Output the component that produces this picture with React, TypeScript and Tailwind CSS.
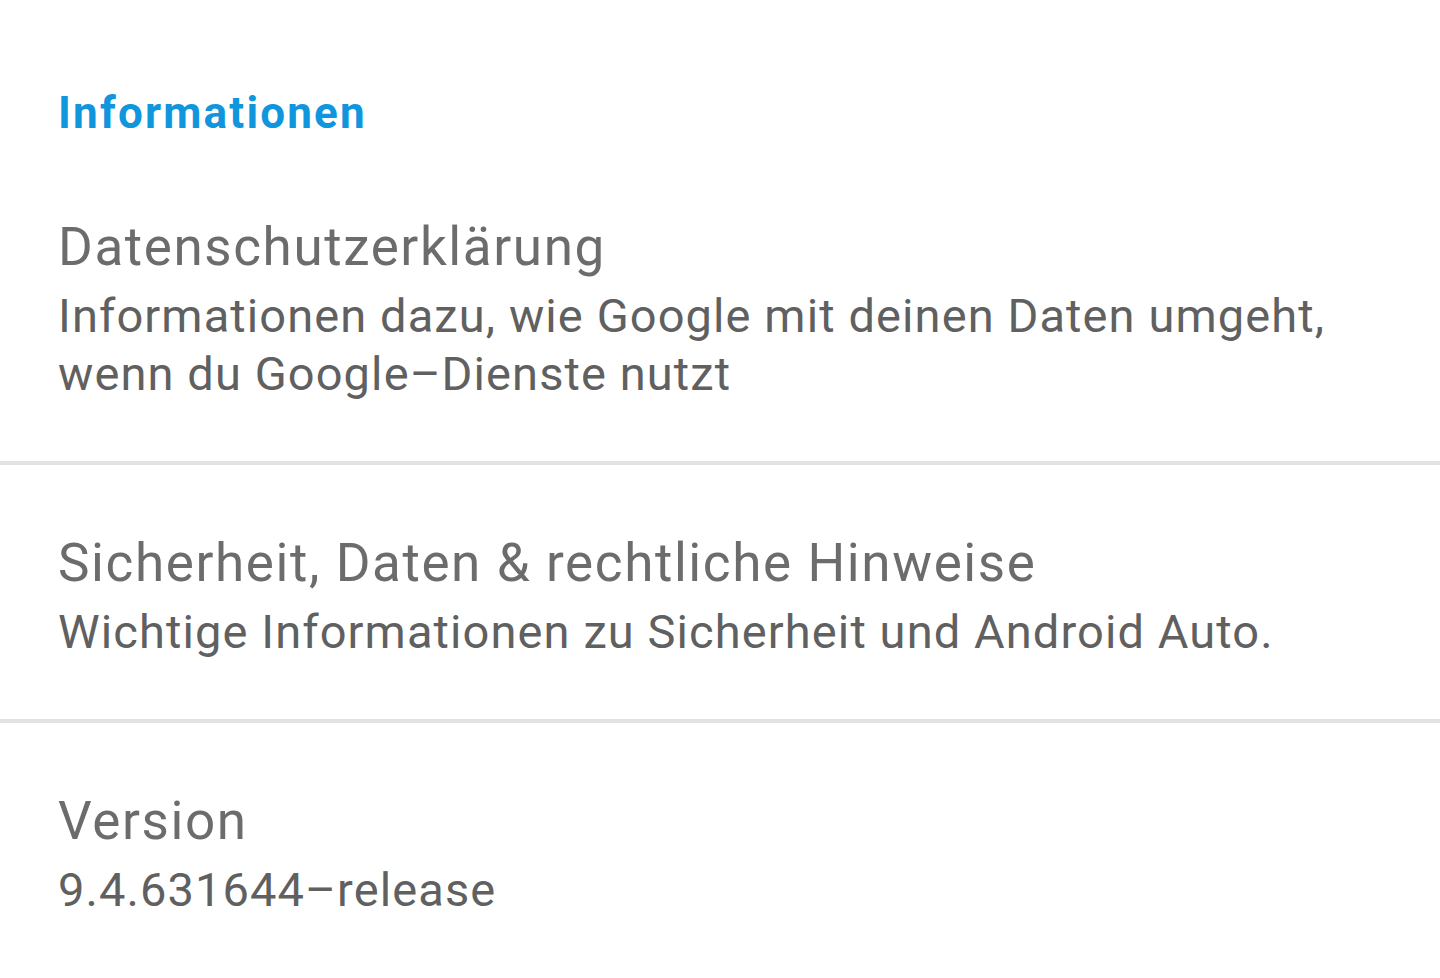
const items = [
  {
    title: "Datenschutzerklärung",
    lines: [
      "Informationen dazu, wie Google mit deinen Daten umgeht,",
      "wenn du Google–Dienste nutzt",
    ],
  },
  {
    title: "Sicherheit, Daten & rechtliche Hinweise",
    lines: ["Wichtige Informationen zu Sicherheit und Android Auto."],
  },
  {
    title: "Version",
    lines: ["9.4.631644–release"],
  },
];

const App = () => {
  return (
    <div className="min-h-screen bg-white font-['Roboto',sans-serif]">
      <div className="px-[58px] pt-[87px]">
        <h1 className="text-[44px] leading-[52px] font-bold tracking-[2.2px] text-[#0f96dc]">Informationen</h1>
      </div>

      <div className="mt-[78px]">
        {items.map((item, i) => (
          <div key={item.title}>
            {i > 0 && <div className="h-[4px] bg-[#e2e2e2]" />}
            <div className={i > 0 ? "px-[58px] pt-[68px] pb-[58px]" : "px-[58px] pb-[58px]"}>
              <h2 className="text-[53px] leading-[60px] tracking-[1.6px] text-[#6c6c6c]">{item.title}</h2>
              <div className="mt-[10px] text-[47px] leading-[58px] tracking-[1.1px] text-[#606060]">
                {item.lines.map((line) => (
                  <p key={line}>{line}</p>
                ))}
              </div>
            </div>
          </div>
        ))}
      </div>
    </div>
  );
};

export default App;
